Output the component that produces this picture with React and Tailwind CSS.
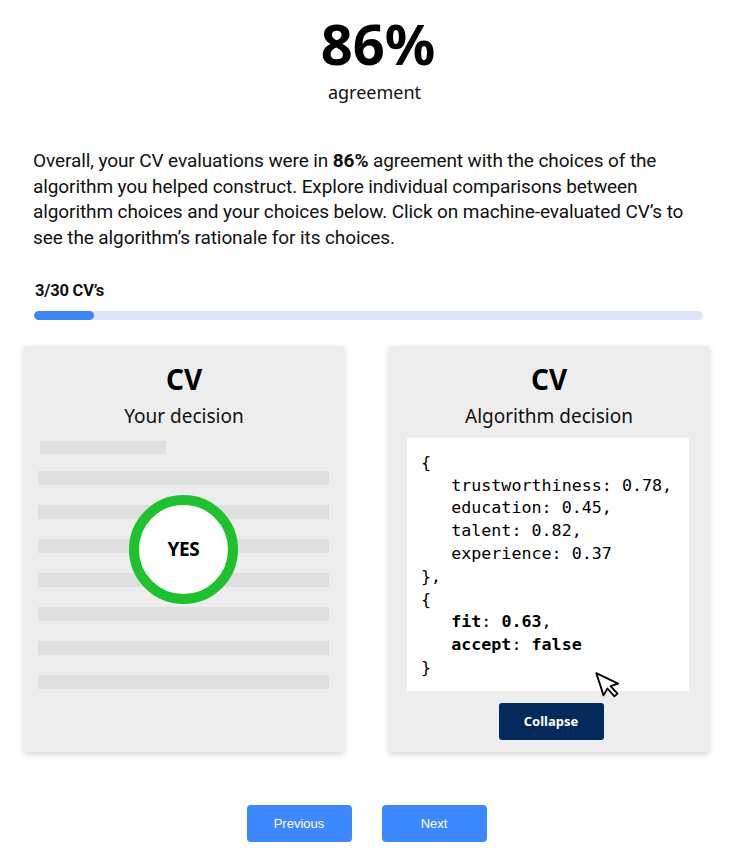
import React from "react";

function Cursor() {
  return (
    <svg
      className="absolute left-[208px] top-[321px] rotate-[-18deg]"
      width="28"
      height="34"
      viewBox="0 0 26 32"
    >
      <path
        d="M3 2 L3 24 L8.5 19 L12.5 28 L16 26.5 L12 17.8 L19.5 17.8 Z"
        fill="white"
        stroke="black"
        strokeWidth="1.7"
        strokeLinejoin="round"
      />
    </svg>
  );
}

function Card({ children }) {
  return (
    <div className="relative w-[320px] bg-[#ededed] shadow-[0_2px_6px_rgba(0,0,0,0.18)] pt-[19px] flex flex-col">
      {children}
    </div>
  );
}

function CardHeader({ subtitle }) {
  return (
    <div className="flex flex-col items-center font-['Noto_Sans',sans-serif]">
      <div className="text-[28px] leading-none font-bold text-black">CV</div>
      <div className="mt-[13px] text-[19px] leading-[20px]">{subtitle}</div>
    </div>
  );
}

export default function App() {
  const bars = [0, 1, 2, 3, 4, 5, 6];
  return (
    <div className="w-[733px] min-h-[853px] bg-white flex flex-col items-center text-[#111]">
      <div className="ml-[23px] pt-[15px] text-[56px] leading-none font-bold text-black font-['Noto_Sans',sans-serif]">
        86%
      </div>
      <div className="ml-[16px] mt-[9px] text-[18px] leading-[24px] font-['Noto_Sans',sans-serif]">
        agreement
      </div>
      <p className="mt-[44px] w-[690px] self-start ml-[33px] text-[19px] leading-[25.7px] tracking-[-0.1px] font-['Roboto',sans-serif]">
        Overall, your CV evaluations were in <b>86%</b> agreement with the choices of the
        <br />
        algorithm you helped construct. Explore individual comparisons between
        <br />
        algorithm choices and your choices below. Click on machine-evaluated CV’s to
        <br />
        see the algorithm’s rationale for its choices.
      </p>
      <div className="mt-[30px] self-start ml-[35px] text-[16.5px] leading-[20px] font-bold tracking-[-0.2px] font-['Roboto',sans-serif]">
        3/30 CV’s
      </div>
      <div className="mt-[10px] self-start ml-[34px] w-[669px] h-[9px] rounded-full bg-[#dce5fb] overflow-hidden">
        <div className="h-full w-[60px] rounded-full bg-[#3d87f5]" />
      </div>

      <div className="mt-[26px] flex gap-[45px] w-[685px]">
        <Card>
          <CardHeader subtitle="Your decision" />
          <div className="px-[14px]">
            <div className="mt-[15px] ml-[2px] w-[126px] h-[13px] bg-[#dfdfdf]" />
            <div className="mt-[17px] flex flex-col gap-[20px]">
              {bars.map((b) => (
                <div key={b} className="h-[14px] w-[291px] bg-[#dfdfdf]" />
              ))}
            </div>
          </div>
          <div className="absolute left-[105px] top-[149px] w-[109px] h-[109px] rounded-full border-[10px] border-[#1fc22e] bg-white flex items-center justify-center">
            <span className="text-[19px] font-bold text-black tracking-[-0.3px] font-['Noto_Sans',sans-serif]">
              YES
            </span>
          </div>
        </Card>

        <Card>
          <CardHeader subtitle="Algorithm decision" />
          <div className="mt-[12px] ml-[18px] w-[282px] h-[253px] bg-white pl-[14px] pt-[13px] text-[16.7px] leading-[22.8px] text-black whitespace-pre font-['DejaVu_Sans_Mono',monospace]">
            <div>{"{"}</div>
            <div>{"   trustworthiness: 0.78,"}</div>
            <div>{"   education: 0.45,"}</div>
            <div>{"   talent: 0.82,"}</div>
            <div>{"   experience: 0.37"}</div>
            <div>{"},"}</div>
            <div>{"{"}</div>
            <div>
              {"   "}
              <b>fit</b>: <b>0.63</b>,
            </div>
            <div>
              {"   "}
              <b>accept</b>: <b>false</b>
            </div>
            <div>{"}"}</div>
          </div>
          <div className="flex justify-center pl-[4px] pt-[12px] pb-[12px]">
            <button className="w-[105px] h-[37px] rounded-[3px] bg-[#032a5b] text-white text-[13px] font-bold font-['Noto_Sans',sans-serif]">
              Collapse
            </button>
          </div>
          <Cursor />
        </Card>
      </div>

      <div className="mt-[53px] flex gap-[30px] font-['Liberation_Sans',Arial,sans-serif]">
        <button className="w-[105px] h-[37px] rounded-[4px] bg-[#3d88fc] text-white text-[13px]">
          Previous
        </button>
        <button className="w-[105px] h-[37px] rounded-[4px] bg-[#3d88fc] text-white text-[13px]">
          Next
        </button>
      </div>
    </div>
  );
}
